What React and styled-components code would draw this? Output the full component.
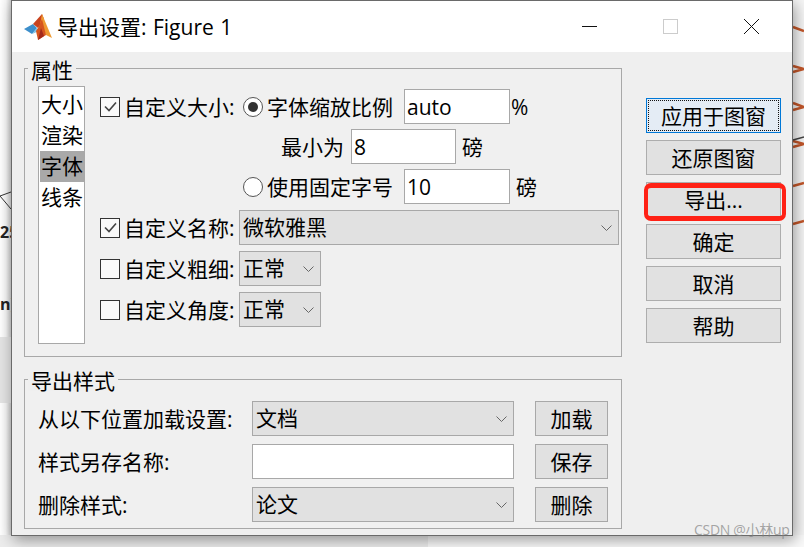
import React from "react";
import styled, { createGlobalStyle } from "styled-components";

const Global = createGlobalStyle`
  html, body { margin: 0; padding: 0; height: 100%; }
  body { background: #fdfdfd; overflow: hidden; }
  * { box-sizing: border-box; }
`;
const FONT = `"Open Sans", "Noto Sans CJK SC", sans-serif`;

const Page = styled.div`
  position: relative; width: 804px; height: 547px; overflow: hidden;
  padding-left: 11px; font-family: ${FONT}; font-size: 21px; color: #000;
  background: linear-gradient(to right, #fff 0, #f6f6f6 6px, #d0d0d0 11px, #d0d0d0 11px);
`;
const Backdrop = styled.svg`position: absolute; left: 0; top: 0;`;
const BackText = styled.span`
  position: absolute; left: ${p => p.$x}px; top: ${p => p.$y}px;
  font: bold 16px "Open Sans", sans-serif; color: #222; white-space: nowrap; line-height: 18px;
`;
const Window = styled.div`
  position: relative; width: 782px; height: 536px; background: #efefef;
  border: 1px solid #6a6a6a; box-shadow: 2px 4px 14px rgba(0,0,0,.38);
  display: flex; flex-direction: column;
`;
const TitleBar = styled.div`
  height: 51px; background: #fff; display: flex; align-items: center; padding-left: 12px; flex: none;
`;
const Title = styled.div`margin-left: 5px; font-size: 21px; line-height: 30px; flex: 1; white-space: nowrap; word-spacing: 1px;`;
const Controls = styled.div`display: flex; padding-right: 33px; gap: 66px; align-items: center;`;
const Body = styled.div`display: flex; gap: 24px; padding: 5px 0 0 12px; align-items: flex-start;`;
const LeftCol = styled.div`width: 598px; display: flex; flex-direction: column; gap: 11px;`;
const Group = styled.fieldset`
  margin: 0; min-width: 0; border: 1px solid #a8a8a8; background: #f0f0f0;
  padding: ${p => p.$pad};
  height: ${p => p.$h}px;
`;
const Legend = styled.legend`
  margin-left: -10px; padding: 0 3px; height: 23px; line-height: 27px; font-size: 21px;
  background: #efefef;
`;
const Split = styled.div`display: flex; gap: 15px; align-items: flex-start;`;
const List = styled.div`
  width: 47px; height: 258px; background: #fff; border: 1px solid #a8a8a8;
  padding: 2px 0 0 1px; flex: none;
`;
const ListItem = styled.div`
  height: 31px; line-height: 30px; padding-left: 1px; white-space: nowrap;
  background: ${p => (p.$on ? "#a9a9a9" : "transparent")};
`;
const Props = styled.div`display: flex; flex-direction: column; padding-top: 3px; gap: 5px;`;
const Row = styled.div`
  height: 35px; display: flex; align-items: center; padding-left: ${p => p.$indent || 0}px;
  margin-top: ${p => p.$mt || 0}px; white-space: nowrap; line-height: 30px;
`;
const Box = styled.span`
  width: 20px; height: 20px; border: 1px solid #333; background: #fafafa; flex: none;
  display: flex; align-items: center; justify-content: center; margin-right: 4px; margin-left: 0;
`;
const CheckLabel = styled.span`width: ${p => p.$w}px; flex: none;`;
const Radio = styled.span`
  width: 20px; height: 20px; border: 1.5px solid #555; border-radius: 50%; background: #fff; flex: none;
  display: flex; align-items: center; justify-content: center; margin-right: 4px;
  &::after { content: ""; width: 10px; height: 10px; border-radius: 50%; background: ${p => (p.$on ? "#333" : "transparent")}; }
`;
const RadioText = styled.span`width: 137px; flex: none;`;
const Input = styled.div`
  width: ${p => p.$w}px; height: 35px; background: #fff; border: 1px solid #a8a8a8; flex: none;
  padding-left: 2px; line-height: 34px; font-size: 21px;
`;
const Unit = styled.span`margin-left: ${p => p.$m}px;`;
const MinLabel = styled.span`width: 70px; flex: none;`;
const Select = styled.div`
  width: ${p => p.$w}px; height: 35px; background: #e1e1e1; border: 1px solid #a8a8a8; flex: none;
  padding: 0 6px 0 3px; display: flex; align-items: center; justify-content: space-between; line-height: 33px;
`;
const StyleGrid = styled.div`
  display: grid; grid-template-columns: 214px 262px 73px; column-gap: 0; row-gap: 8px;
  grid-auto-rows: 35px; align-items: center;
`;
const StyleLabel = styled.div`white-space: nowrap; line-height: 30px;`;
const Action = styled.div`
  margin-left: 21px; width: 73px; height: 35px; background: #e1e1e1; border: 1px solid #a8a8a8;
  display: flex; align-items: center; justify-content: center; line-height: 30px; white-space: nowrap;
`;
const Buttons = styled.div`display: flex; flex-direction: column; gap: 7px; padding-top: 41px; width: 135px;`;
const Btn = styled.div`
  position: relative; height: 35px; background: ${p => (p.$primary ? "#e4ecf5" : "#e1e1e1")};
  border: 1px solid ${p => (p.$primary ? "#0078d7" : "#adadad")};
  display: flex; align-items: center; justify-content: center; line-height: 30px; white-space: nowrap;
  ${p => p.$primary && `outline: 1px dotted #111; outline-offset: -3px;`}
`;
const RedMark = styled.span`
  position: absolute; left: -3px; right: -6px; top: 0px; bottom: -5px;
  border-style: solid; border-color: #ff2115; border-width: 5px 4px; border-radius: 7px;
`;
const Watermark = styled.span`
  position: absolute; left: 694px; top: 521px; font: 14px/18px "Open Sans", "Noto Sans CJK SC", sans-serif;
  letter-spacing: -.3px; color: rgba(130,130,130,.7); white-space: nowrap;
`;

const Chevron = () => (
  <svg width="11" height="6" viewBox="0 0 11 6" fill="none"><path d="M.5.5l5 5 5-5" stroke="#666" strokeWidth="1" /></svg>
);
const Check = () => (
  <svg width="13" height="11" viewBox="0 0 13 11" fill="none"><path d="M1 5.5l4 4 7-8" stroke="#444" strokeWidth="1.6" /></svg>
);
const Logo = () => (
  <svg width="28" height="28" viewBox="0 0 28 28" style={{ flex: "none", filter: "blur(.6px)" }}>
    <polygon points="0,16 9,11 13,15 8,21" fill="#3d8fcb" />
    <polygon points="8,21 13,15 15,18" fill="#7cc0e6" />
    <polygon points="9,11 18,1 20,6 14,15" fill="#c9431e" />
    <polygon points="18,1 28,25 22,22 16,12" fill="#ee9a32" />
    <polygon points="14,15 18,6 22,22 14,27 12,18" fill="#d6551f" />
    <polygon points="14,27 17,15 20,23" fill="#a32a1c" />
  </svg>
);
const Minimize = () => (
  <svg width="15" height="15" viewBox="0 0 15 15"><path d="M0 7.5h15" stroke="#111" strokeWidth="1" /></svg>
);
const Maximize = () => (
  <svg width="15" height="15" viewBox="0 0 15 15"><rect x=".5" y=".5" width="14" height="14" fill="none" stroke="#ccc" /></svg>
);
const Close = () => (
  <svg width="15" height="15" viewBox="0 0 15 15"><path d="M0 0l15 15M15 0L0 15" stroke="#111" strokeWidth="1" /></svg>
);

export default function App() {
  return (
    <Page>
      <Global />
      <Backdrop width="804" height="547" viewBox="0 0 804 547">
        <rect x="793" y="0" width="11" height="547" fill="#f6f6f6" />
        <rect x="0" y="535" width="428" height="12" fill="#ececec" />
        <rect x="428" y="535" width="376" height="12" fill="#fafafa" />
        <rect x="0" y="337" width="11" height="66" fill="#e4e4e4" />
        <path d="M0 196l11-4M0 196l11 13" stroke="#333" strokeWidth="1" fill="none" />
        <path d="M793 27l11 4M793 66l11 3 -11 3M793 103l11 4 -11 3M793 141l11 3 -11 3" stroke="#c4572a" strokeWidth="2.5" fill="none" />
        <path d="M793 140l11-3" stroke="#444" strokeWidth="1.5" />
        <path d="M793 186l11-3M793 224l11-3" stroke="#c4572a" strokeWidth="2.5" fill="none" />
      </Backdrop>
      <BackText $x={0} $y={223}>25</BackText>
      <BackText $x={0} $y={295}>n)</BackText>
      <Window>
        <TitleBar>
          <Logo />
          <Title>导出设置: Figure 1</Title>
          <Controls>
            <Minimize />
            <Maximize />
            <Close />
          </Controls>
        </TitleBar>
        <Body>
          <LeftCol>
            <Group $h={300} $pad="6px 0 0 13px">
              <Legend>属性</Legend>
              <Split>
                <List>
                  <ListItem>大小</ListItem>
                  <ListItem>渲染</ListItem>
                  <ListItem $on>字体</ListItem>
                  <ListItem>线条</ListItem>
                </List>
                <Props>
                  <Row>
                    <Box><Check /></Box>
                    <CheckLabel $w={119}>自定义大小:</CheckLabel>
                    <Radio $on />
                    <RadioText>字体缩放比例</RadioText>
                    <Input $w={106}>auto</Input>
                    <Unit $m={1}>%</Unit>
                  </Row>
                  <Row $indent={181}>
                    <MinLabel>最小为</MinLabel>
                    <Input $w={105}>8</Input>
                    <Unit $m={6}>磅</Unit>
                  </Row>
                  <Row $indent={143}>
                    <Radio />
                    <RadioText>使用固定字号</RadioText>
                    <Input $w={106}>10</Input>
                    <Unit $m={6}>磅</Unit>
                  </Row>
                  <Row $mt={1}>
                    <Box><Check /></Box>
                    <CheckLabel $w={115}>自定义名称:</CheckLabel>
                    <Select $w={380}>微软雅黑<Chevron /></Select>
                  </Row>
                  <Row $mt={1}>
                    <Box />
                    <CheckLabel $w={115}>自定义粗细:</CheckLabel>
                    <Select $w={82}>正常<Chevron /></Select>
                  </Row>
                  <Row $mt={1}>
                    <Box />
                    <CheckLabel $w={115}>自定义角度:</CheckLabel>
                    <Select $w={82}>正常<Chevron /></Select>
                  </Row>
                </Props>
              </Split>
            </Group>
            <Group $h={161} $pad="10px 0 0 13px">
              <Legend>导出样式</Legend>
              <StyleGrid>
                <StyleLabel>从以下位置加载设置:</StyleLabel>
                <Select $w={262}>文档<Chevron /></Select>
                <Action>加载</Action>
                <StyleLabel>样式另存名称:</StyleLabel>
                <Input $w={262} />
                <Action>保存</Action>
                <StyleLabel>删除样式:</StyleLabel>
                <Select $w={262}>论文<Chevron /></Select>
                <Action>删除</Action>
              </StyleGrid>
            </Group>
          </LeftCol>
          <Buttons>
            <Btn $primary>应用于图窗</Btn>
            <Btn>还原图窗</Btn>
            <Btn>导出...<RedMark /></Btn>
            <Btn>确定</Btn>
            <Btn>取消</Btn>
            <Btn>帮助</Btn>
          </Buttons>
        </Body>
      </Window>
      <Watermark>CSDN @小林up</Watermark>
    </Page>
  );
}
